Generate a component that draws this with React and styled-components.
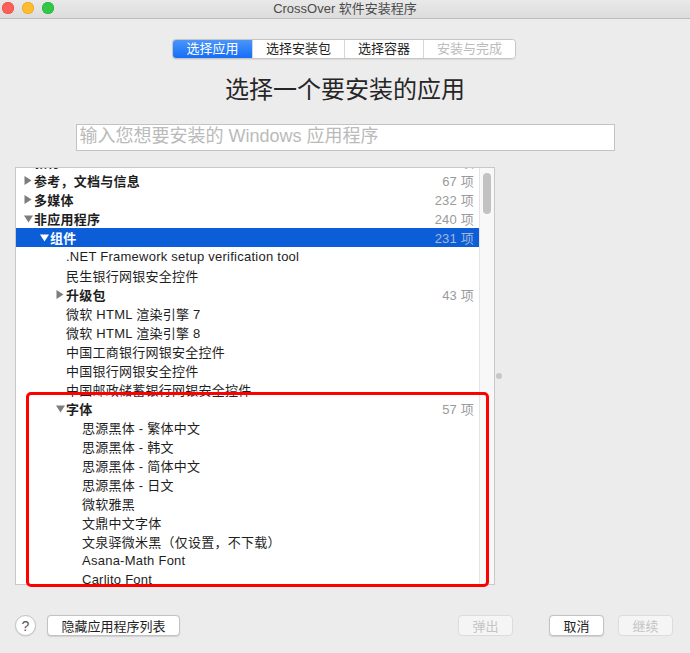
import styled, { createGlobalStyle } from 'styled-components'

const GlobalStyle = createGlobalStyle`
  html, body {
    margin: 0;
    padding: 0;
    background: #ececec;
  }
  body {
    font-family: 'Liberation Sans', 'Noto Sans CJK SC', sans-serif;
    font-size: 13px;
    color: #222;
  }
  * {
    box-sizing: border-box;
  }
`

const steps = [
  { label: '选择应用', state: 'active' },
  { label: '选择安装包', state: 'normal' },
  { label: '选择容器', state: 'normal' },
  { label: '安装与完成', state: 'disabled' },
]

const rows = [
  { text: '教育', level: 0, kind: 'closed', count: '24 项' },
  { text: '参考，文档与信息', level: 0, kind: 'closed', count: '67 项' },
  { text: '多媒体', level: 0, kind: 'closed', count: '232 项' },
  { text: '非应用程序', level: 0, kind: 'open', count: '240 项' },
  { text: '组件', level: 1, kind: 'open', count: '231 项', selected: true },
  { text: '.NET Framework setup verification tool', level: 2 },
  { text: '民生银行网银安全控件', level: 2 },
  { text: '升级包', level: 2, kind: 'closed', count: '43 项' },
  { text: '微软 HTML 渲染引擎 7', level: 2 },
  { text: '微软 HTML 渲染引擎 8', level: 2 },
  { text: '中国工商银行网银安全控件', level: 2 },
  { text: '中国银行网银安全控件', level: 2 },
  { text: '中国邮政储蓄银行网银安全控件', level: 2 },
  { text: '字体', level: 2, kind: 'open', count: '57 项' },
  { text: '思源黑体 - 繁体中文', level: 3 },
  { text: '思源黑体 - 韩文', level: 3 },
  { text: '思源黑体 - 简体中文', level: 3 },
  { text: '思源黑体 - 日文', level: 3 },
  { text: '微软雅黑', level: 3 },
  { text: '文鼎中文字体', level: 3 },
  { text: '文泉驿微米黑（仅设置，不下载）', level: 3 },
  { text: 'Asana-Math Font', level: 3 },
  { text: 'Carlito Font', level: 3 },
]

const Triangle = ({ open, color }) =>
  open ? (
    <svg width='9' height='8' viewBox='0 0 9 8'>
      <polygon points='0,0.5 9,0.5 4.5,7.5' fill={color} />
    </svg>
  ) : (
    <svg width='8' height='9' viewBox='0 0 8 9'>
      <polygon points='0.5,0 7.5,4.5 0.5,9' fill={color} />
    </svg>
  )

const App = () => {
  return (
    <Window>
      <GlobalStyle />
      <TitleBar>
        <Lights>
          <Light $color='#fc5f57' $edge='#e0443e' />
          <Light $color='#fdbc2e' $edge='#dea123' />
          <Light $color='#33c748' $edge='#1aab29' />
        </Lights>
        <WindowTitle>CrossOver 软件安装程序</WindowTitle>
      </TitleBar>

      <Content>
        <Segmented>
          {steps.map((s) => (
            <Segment key={s.label} $state={s.state}>
              {s.label}
            </Segment>
          ))}
        </Segmented>

        <Heading>选择一个要安装的应用</Heading>

        <SearchField placeholder='输入您想要安装的 Windows 应用程序' />

        <ListArea>
          <ListBox>
            <Rows>
              {rows.map((r, i) => (
                <Row key={i} $selected={r.selected} $level={r.level}>
                  <Toggle>
                    {r.kind && (
                      <Triangle
                        open={r.kind === 'open'}
                        color={r.selected ? '#ffffff' : '#7d7d7d'}
                      />
                    )}
                  </Toggle>
                  <RowText $group={!!r.kind} $selected={r.selected}>
                    {r.text}
                  </RowText>
                  {r.count && <Count $selected={r.selected}>{r.count}</Count>}
                </Row>
              ))}
            </Rows>
            <ScrollTrack>
              <ScrollThumb />
            </ScrollTrack>
          </ListBox>
          <ResizeDot />
          <Highlight />
        </ListArea>

        <BottomBar>
          <HelpButton>?</HelpButton>
          <Button>隐藏应用程序列表</Button>
          <Spacer />
          <Button $disabled>弹出</Button>
          <Button $gap>取消</Button>
          <Button $disabled>继续</Button>
        </BottomBar>
      </Content>
    </Window>
  )
}

const Window = styled.div`
  width: 690px;
  height: 653px;
  display: flex;
  flex-direction: column;
  background: #ececec;
  overflow: hidden;
`

const TitleBar = styled.div`
  height: 19px;
  flex-shrink: 0;
  display: flex;
  align-items: center;
  position: relative;
  background: linear-gradient(#e9e9e9, #dcdcdc);
  border-bottom: 1px solid #bdbdbd;
`

const Lights = styled.div`
  display: flex;
  gap: 8px;
  padding-left: 2px;
  margin-top: -2px;
`

const Light = styled.span`
  width: 12px;
  height: 12px;
  border-radius: 50%;
  background: ${(p) => p.$color};
  box-shadow: inset 0 0 0 0.5px ${(p) => p.$edge};
`

const WindowTitle = styled.div`
  position: absolute;
  left: 0;
  right: 0;
  top: 0;
  line-height: 17px;
  text-align: center;
  font-size: 13px;
  color: #4b4b4b;
  pointer-events: none;
`

const Content = styled.div`
  display: flex;
  flex-direction: column;
  align-items: center;
  padding-top: 20px;
`

const Segmented = styled.div`
  display: flex;
  height: 20px;
  margin-left: -2px;
  border: 1px solid #c6c6c6;
  border-radius: 4px;
  background: #fff;
  overflow: hidden;
  box-shadow: 0 0.5px 1px rgba(0, 0, 0, 0.08);
`

const Segment = styled.div`
  padding: 0 13px;
  line-height: 18px;
  font-size: 13px;
  border-left: 1px solid #d6d6d6;
  color: ${(p) =>
    p.$state === 'active' ? '#fff' : p.$state === 'disabled' ? '#bcbcbc' : '#1f1f1f'};
  background: ${(p) =>
    p.$state === 'active' ? 'linear-gradient(#4a95fb, #156ef6)' : '#fff'};

  &:first-child {
    border-left: none;
    padding: 0 13.5px;
  }
`

const Heading = styled.h1`
  margin: 16px 0 0;
  font-size: 24px;
  line-height: 30px;
  font-weight: 400;
  color: #262626;
`

const SearchField = styled.input`
  margin-top: 19px;
  width: 539px;
  height: 27px;
  border: 1px solid #c3c3c3;
  background: #fff;
  padding: 0 3px 2px;
  font-family: inherit;
  font-size: 18px;
  color: #222;
  outline: none;

  &::placeholder {
    color: #bababa;
  }
`

const ListArea = styled.div`
  position: relative;
  align-self: flex-start;
  margin: 16px 0 0 15px;
  display: flex;
  align-items: center;
  gap: 1px;
`

const ListBox = styled.div`
  width: 480px;
  height: 418px;
  display: flex;
  background: #fff;
  border: 1px solid #c8c8c8;
  overflow: hidden;
`

const Rows = styled.div`
  flex: 1;
  margin-top: -16px;
  display: flex;
  flex-direction: column;
`

const Row = styled.div`
  height: 19px;
  flex-shrink: 0;
  display: flex;
  align-items: center;
  padding-left: ${(p) => 8 + p.$level * 16}px;
  padding-right: 5px;
  background: ${(p) => (p.$selected ? '#0b5ed8' : 'transparent')};
`

const Toggle = styled.span`
  width: 10px;
  flex-shrink: 0;
  display: flex;
  align-items: center;
`

const RowText = styled.span`
  flex: 1;
  white-space: nowrap;
  font-size: 13px;
  letter-spacing: 0.25px;
  font-weight: ${(p) => (p.$group ? 700 : 400)};
  color: ${(p) => (p.$selected ? '#fff' : '#1e1e1e')};
`

const Count = styled.span`
  font-size: 13px;
  letter-spacing: 0.2px;
  color: ${(p) => (p.$selected ? '#a6b7d6' : '#9a9a9a')};
`

const ScrollTrack = styled.div`
  width: 15px;
  flex-shrink: 0;
  background: #f8f8f8;
  border-left: 1px solid #e4e4e4;
  padding: 5px 3px 0;
`

const ScrollThumb = styled.div`
  width: 8px;
  height: 41px;
  border-radius: 4px;
  background: #c2c2c2;
`

const ResizeDot = styled.div`
  width: 6px;
  height: 6px;
  border-radius: 50%;
  background: #c6c6c6;
`

const Highlight = styled.div`
  position: absolute;
  left: 11px;
  top: 225px;
  width: 463px;
  height: 195px;
  border: 3px solid #ff0000;
  border-radius: 5px;
  pointer-events: none;
`

const BottomBar = styled.div`
  align-self: stretch;
  display: flex;
  align-items: center;
  margin-top: 30px;
  padding: 0 17px 0 15px;
`

const HelpButton = styled.div`
  width: 21px;
  height: 21px;
  border-radius: 50%;
  border: 1px solid #c3c3c3;
  background: #fff;
  box-shadow: 0 0.5px 1px rgba(0, 0, 0, 0.12);
  display: flex;
  align-items: center;
  justify-content: center;
  font-size: 14px;
  color: #555;
  margin-right: 11px;
`

const Spacer = styled.div`
  flex: 1;
`

const Button = styled.div`
  height: 21px;
  padding: 0 13.5px;
  margin-left: ${(p) => (p.$gap ? '36px' : '0')};
  margin-right: ${(p) => (p.$gap ? '14px' : '0')};
  display: flex;
  align-items: center;
  justify-content: center;
  border-radius: 4px;
  font-size: 13px;
  border: 1px solid ${(p) => (p.$disabled ? '#dcdcdc' : '#c2c2c2')};
  background: ${(p) => (p.$disabled ? '#f5f5f5' : '#fff')};
  color: ${(p) => (p.$disabled ? '#c4c4c4' : '#1e1e1e')};
  box-shadow: ${(p) => (p.$disabled ? 'none' : '0 0.5px 1px rgba(0, 0, 0, 0.12)')};
`

export default App
